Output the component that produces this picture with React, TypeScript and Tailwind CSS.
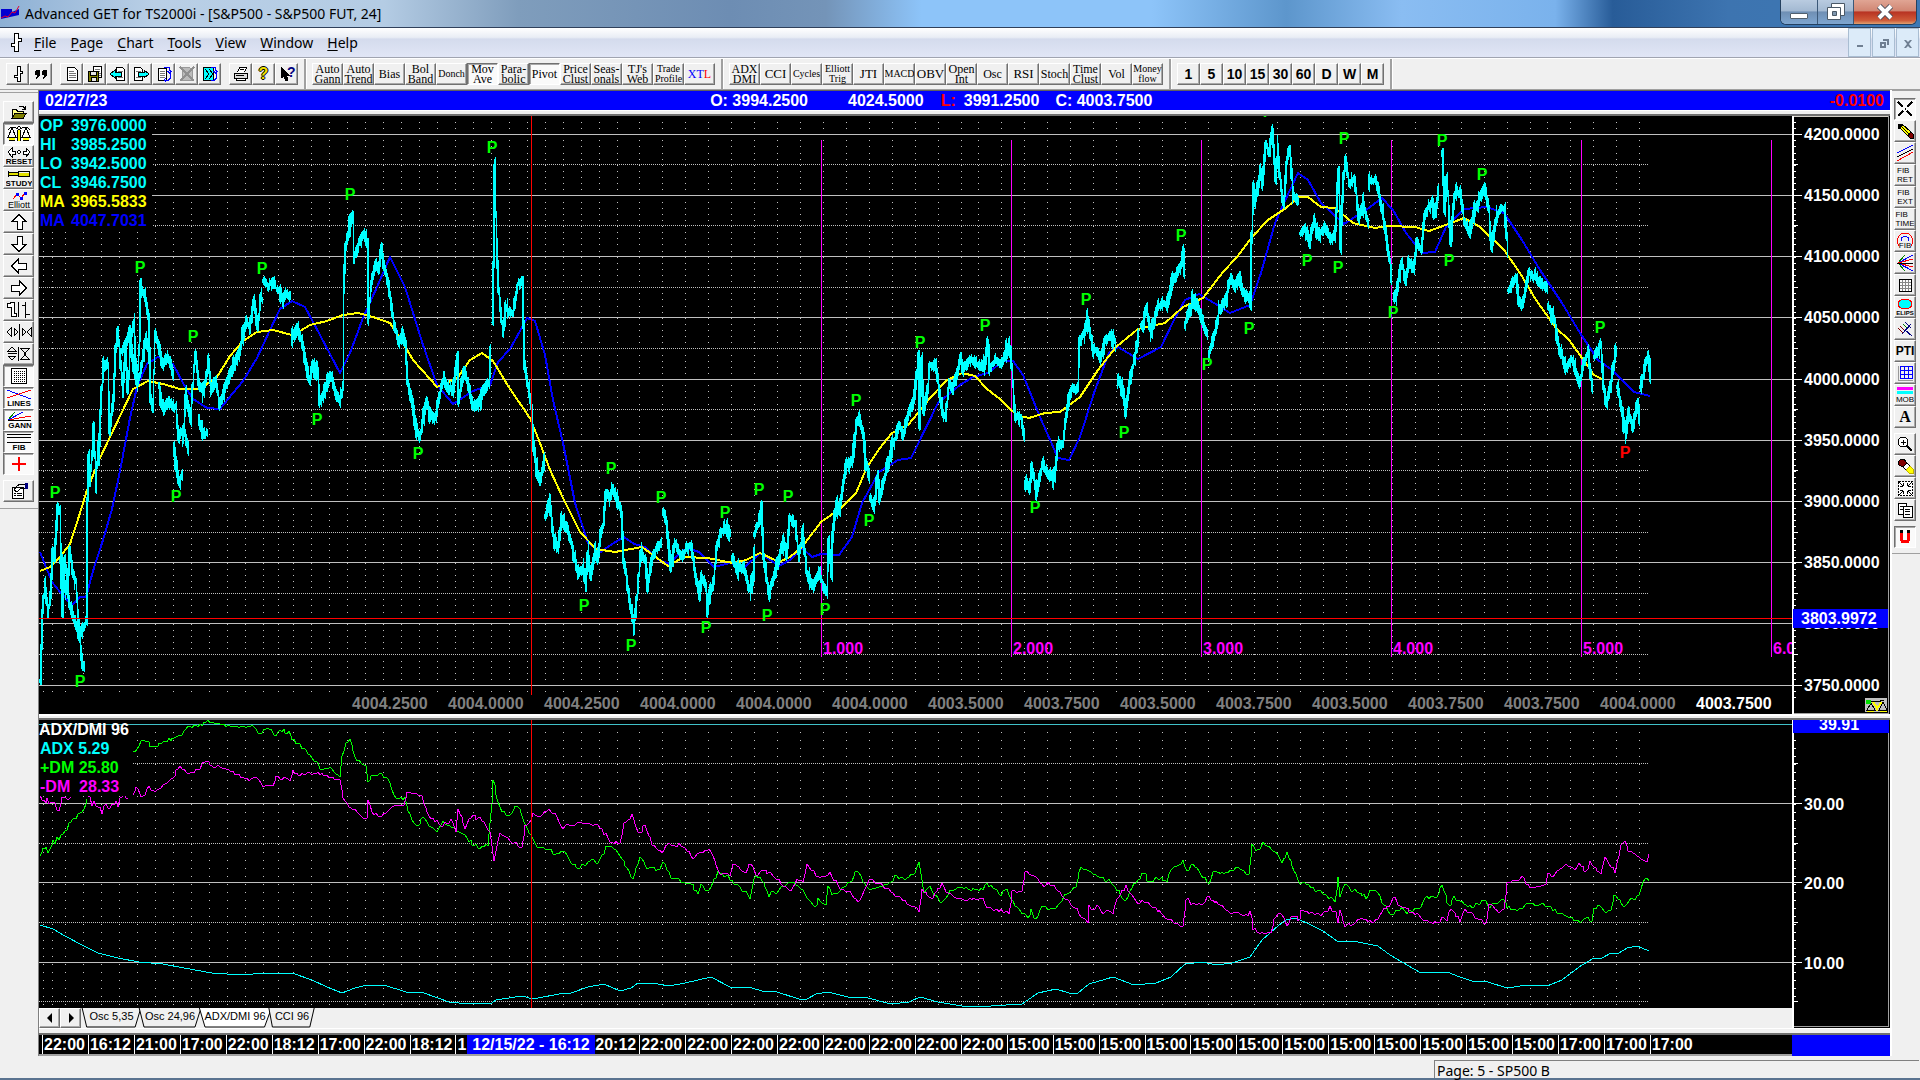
import React from "react";

type Point = [number, number];

// top left corner of the two plots inside the window
const LEFT = 39;
const PRICE_TOP = 116;
const STUDY_TOP = 720;

const parse = (text: string): Point[] =>
  text
    .trim()
    .split(/\s+/)
    .map((pair) => pair.split(",").map(Number) as Point);

const randomizer = (seed: number) => () => {
  seed = (seed * 1664525 + 1013904223) % 4294967296;
  return seed / 4294967296;
};

const walk = (points: Point[], step: number): Point[] => {
  const result: Point[] = [];
  for (let i = 0; i < points.length - 1; i++) {
    const [x1, y1] = points[i];
    const [x2, y2] = points[i + 1];
    const count = Math.max(1, Math.round(Math.abs(x2 - x1) / step));
    for (let k = 0; k < count; k++) {
      result.push([x1 + ((x2 - x1) * k) / count, y1 + ((y2 - y1) * k) / count]);
    }
  }
  result.push(points[points.length - 1]);
  return result;
};

const linePath = (text: string) => "M" + parse(text).join("L");

const jaggedPath = (text: string, seed: number, size = 2) => {
  const random = randomizer(seed);
  return (
    "M" +
    walk(parse(text), 2)
      .map(([x, y]) => `${Math.round(x)},${Math.round(y + (random() - 0.5) * 2 * size)}`)
      .join("L")
  );
};

const priceSegments = [
  "40,680 42,609 44,582 47,613 50,594 52,552 54,559 57,508 59,510 61,582 62,615 64,559 67,594 69,548 72,575 75,580 78,630 82,630 85,622 87,620 87,498 88,455 89,483 93,425 95,488 97,444 98,460 101,388 103,366 107,364 109,430 113,398 115,350 117,332 119,353 122,392 125,352 127,392 130,335 133,322 136,382 139,335 140,285 145,302 148,318 150,400 152,408 154,335 158,345 162,366 167,356 173,376",
  "60,560 64,585 68,600 72,615 77,632 80,640",
  "80,648 82,665 84,668",
  "122,350 125,345 129,330 133,370 137,384 141,365 145,340 150,352",
  "158,387 163,410 168,402 175,408 178,437 183,429 188,450",
  "173,446 176,467 178,480 182,475",
  "182,440 185,395 190,418 193,368 195,353 198,383 202,392 208,364 210,391 215,379 219,406 223,391 230,372 235,362 240,347 245,320 249,328 253,300 257,328 260,299 262,300",
  "263,281 267,286 272,282 275,286",
  "277,289 282,299 285,293 290,297",
  "198,418 202,434 207,433",
  "292,337 297,328 302,345 305,365 309,381 312,366 317,374 319,402 323,395 330,374 335,393 339,402 342,387 343,291 345,245 348,230 352,215 353,258 358,244 363,234 367,247 368,315 370,287 375,263 378,268 381,246 383,265 388,286 393,322 398,343 402,332 405,347 407,383 412,406 415,427 419,437 422,421 426,402 430,416 435,419 438,397 443,378 448,391 453,387 457,357 458,400 463,370 468,387 472,406 478,404 483,389 488,383 490,351",
  "492,322 493,265 494,165 495,215 498,291 502,332 505,309 512,314 517,284 522,282 523,326 524,366 529,398 531,407 533,447 536,468 539,483 544,459",
  "545,516 549,500 552,533 557,549 561,520 567,530 571,547 577,575 582,567 585,588 587,552 590,576 594,553 597,560 600,535 603,523 605,494 609,497 612,488 616,499 621,514 623,560 627,587 632,620 633,630 636,597 640,553 645,560 647,588 651,560 655,549 661,543",
  "663,512 666,523 670,568 674,543 681,558 687,545 691,547 695,577 699,596 701,577 705,587 707,612 709,593 712,588 716,547 720,532 726,529 730,535",
  "732,559 737,570 743,567 749,590 753,577 754,552",
  "754,533 758,522 761,506 763,557 768,596 772,580 776,567 779,555 783,541 786,556 789,518 794,524 798,556 802,532 806,573 812,588 818,571 823,588 826,593 828,540 831,576 832,533 835,505 839,510 843,480 846,465 852,460 856,423 858,417 863,437 865,463 869,478",
  "870,500 873,508 877,476 879,497 883,480 888,463 892,443",
  "893,443 898,425 903,435 908,413 913,400 918,357 919,425 921,358 923,411 927,390 929,365 935,365 938,387 942,415 945,418 948,382 952,388 958,367 960,357 962,368 970,359 980,367 985,362 987,342 989,367 995,359 1001,363 1007,346 1010,349 1013,400 1015,418 1020,417 1024,438",
  "1025,482 1029,490 1031,467 1036,492 1042,463 1048,477 1054,478 1057,447 1062,443 1067,405 1071,389 1077,388 1079,342 1085,327 1087,319 1091,345 1100,358 1104,342 1111,335 1115,343",
  "1117,379 1123,393 1125,413 1129,383 1134,355 1138,339",
  "1141,327 1146,308 1150,336 1154,317 1158,305 1167,303 1172,280 1179,269 1183,254 1184,273",
  "1185,321 1190,310 1193,297 1199,313 1207,335",
  "1208,355 1212,340 1215,330 1218,310 1225,300 1230,277 1234,287 1239,277 1242,291 1248,297 1250,306 1251,237 1253,187 1254,203 1260,170 1262,183 1265,144 1268,153 1272,131 1275,180 1277,147 1279,177 1283,206 1286,163 1289,148 1292,193 1298,203",
  "1300,233 1305,229 1309,243 1313,220 1318,235 1324,226 1330,241 1335,230 1338,171 1340,248 1343,174 1345,160 1348,183 1354,180 1358,220 1362,203 1368,225",
  "1369,182 1375,179 1379,197 1384,227 1388,253 1391,278",
  "1393,299 1396,292 1401,261 1405,283 1408,261 1413,271 1416,243 1421,250 1424,213 1431,202 1435,215 1438,190",
  "1442,153 1444,210 1446,177 1450,243 1454,193 1460,192 1463,220 1469,234 1473,213 1480,196 1484,188 1488,210 1491,249 1496,216 1500,208 1504,209 1507,253",
  "1508,290 1516,277 1518,302 1522,305 1528,273 1533,277 1540,283 1547,287",
  "1547,307 1554,320 1558,347 1565,368 1571,359 1579,383 1583,363 1587,353 1592,389",
  "1594,357 1600,344 1603,387 1606,404 1611,377 1615,350 1616,355",
  "1617,387 1621,410 1625,436 1628,412 1632,428 1637,402 1639,421",
  "1640,387 1644,367 1647,354 1650,375",
];

const candlePath = () => {
  const random = randomizer(77);
  let wicks = "";
  let bodies = "";
  priceSegments.forEach((segment) => {
    const points = walk(parse(segment), 1);
    points.forEach(([x, y], i) => {
      const previous = i > 0 ? points[i - 1][1] : y;
      const spread = random() < 0.2 ? 10 : 5;
      const top = Math.round(Math.min(previous, y) - 2 - random() * spread);
      const bottom = Math.round(Math.max(previous, y) + 2 + random() * spread);
      const column = Math.round(x);
      wicks += `M${column + 0.5},${top}V${bottom}`;
      if (random() < 0.75) {
        bodies += `M${column},${top + 2}V${bottom - 2}`;
      }
    });
  });
  return { wicks, bodies };
};

const candles = candlePath();

const yellowAverage =
  "40,571 50,567 60,557 70,544 80,513 87,490 100,458 110,437 133,389 148,381 163,384 180,389 200,389 217,377 230,356 243,341 257,332 273,330 292,335 300,331 310,325 327,321 343,315 358,313 373,317 390,323 403,343 413,360 430,379 437,387 447,383 458,377 470,360 482,353 493,361 510,389 530,418 540,443 550,470 563,498 580,532 596,549 615,552 642,547 653,555 668,566 684,557 707,558 733,563 746,560 760,553 779,562 790,557 802,547 821,522 841,508 856,493 867,467 880,448 892,433 908,425 918,413 930,398 947,380 962,373 975,376 987,389 1000,399 1012,411 1020,416 1029,418 1045,413 1060,412 1080,397 1098,370 1116,347 1138,329 1165,323 1183,307 1203,298 1223,272 1237,257 1252,237 1268,220 1286,208 1299,197 1308,197 1321,207 1335,208 1353,223 1375,228 1388,226 1415,227 1429,231 1451,223 1464,218 1480,227 1504,250 1520,273 1536,300 1556,328 1569,340 1585,362 1594,375 1602,379";

const blueAverage =
  "40,552 52,582 60,592 72,605 80,597 86,597 93,571 103,540 112,509 120,471 130,418 137,387 147,364 158,357 173,364 183,383 193,399 207,408 220,409 233,393 243,381 257,358 270,330 280,309 292,301 305,307 320,335 340,373 350,353 363,318 377,287 390,257 405,287 423,345 437,385 453,404 473,391 490,385 498,362 510,349 520,331 527,318 535,321 545,355 553,400 563,443 575,503 588,543 601,552 612,544 624,537 634,544 645,547 659,560 670,564 679,554 687,548 699,552 714,567 730,563 745,567 760,553 779,566 790,560 802,548 812,557 821,554 839,555 852,537 862,503 879,472 898,460 911,458 916,448 938,403 960,385 973,377 988,373 1003,361 1013,361 1023,375 1040,417 1058,458 1069,460 1080,437 1094,393 1109,353 1118,347 1138,359 1161,347 1174,320 1185,300 1199,294 1214,303 1230,313 1250,305 1261,273 1275,223 1290,190 1298,173 1308,180 1321,203 1344,224 1366,210 1382,198 1393,210 1406,233 1422,253 1435,252 1446,227 1464,209 1487,207 1504,213 1522,240 1540,270 1562,303 1580,333 1598,360 1612,370 1634,392 1650,396";

const plusDm =
  "133,752 137,750 141,740 147,742 152,748 163,742 180,735 188,727 200,725 208,721 220,725 237,728 252,726 258,733 269,729 276,735 280,730 289,733 294,740 310,755 322,770 330,768 340,778 342,757 346,743 350,740 355,758 366,767 368,780 373,777 380,773 388,780 396,798 405,798 408,813 418,827 423,818 435,832 443,823 455,828 465,837 478,848 488,845 492,803 493,778 498,803 502,813 512,813 515,807 520,808 524,823 533,840 539,848 549,848 555,855 563,849 571,863 580,868 590,860 598,863 606,848 612,846 620,857 629,872 633,879 638,862 640,858 647,867 660,870 663,860 671,877 683,882 689,882 698,892 701,885 707,892 718,873 728,877 738,885 750,897 754,878 760,875 769,895 779,890 787,882 794,882 803,892 815,908 818,900 826,905 828,885 832,895 840,890 850,882 857,871 869,890 877,887 889,885 895,877 905,878 915,873 919,862 924,892 930,887 942,904 948,893 960,888 983,890 987,883 1001,894 1007,889 1013,903 1028,918 1031,910 1036,920 1042,905 1048,908 1054,908 1060,902 1067,892 1076,887 1081,867 1091,873 1101,877 1111,882 1126,902 1132,887 1144,872 1149,883 1158,878 1167,880 1171,868 1183,862 1187,872 1193,865 1209,883 1213,872 1224,874 1238,868 1244,873 1249,872 1252,845 1256,852 1263,843 1271,848 1278,855 1282,863 1287,853 1294,870 1300,882 1313,888 1325,895 1335,900 1338,878 1340,895 1345,885 1353,890 1368,898 1370,890 1376,890 1382,902 1392,915 1402,908 1407,913 1421,907 1425,897 1437,898 1442,885 1449,907 1454,897 1472,908 1484,899 1490,907 1504,900 1507,908 1523,910 1527,902 1547,906 1566,917 1582,922 1588,917 1592,922 1594,909 1600,905 1606,915 1611,908 1614,894 1625,907 1629,900 1639,897 1643,880 1647,877 1649,880";
const plusDmStart = "40,858 43,845 48,850 55,842 61,835 67,827 76,818 84,810 87,797";

const minusDm =
  "133,796 136,788 143,798 149,787 155,793 163,785 171,780 180,767 186,773 198,770 205,761 214,766 224,768 241,777 251,780 257,778 263,786 273,786 276,777 290,780 293,771 300,775 318,772 327,777 340,780 343,797 347,805 355,810 364,821 367,818 368,798 372,812 382,816 396,805 404,805 407,792 416,792 422,798 429,817 443,825 451,820 456,830 458,810 465,827 471,817 480,818 490,833 494,862 500,832 506,838 514,842 522,848 525,827 531,820 533,813 541,816 545,810 553,812 563,828 571,823 584,823 598,825 612,843 620,842 624,825 632,815 638,832 640,833 645,825 652,843 662,852 669,842 675,847 681,844 693,857 699,852 709,850 720,872 730,875 733,865 746,872 749,862 758,877 762,870 771,873 781,883 791,892 797,880 803,882 807,864 818,877 830,873 840,888 850,892 858,902 869,880 881,885 901,898 919,910 922,890 931,900 942,884 948,893 960,900 983,900 987,907 1009,912 1012,892 1022,890 1025,871 1036,877 1044,887 1048,883 1054,885 1069,903 1077,910 1081,918 1088,921 1089,907 1099,907 1103,912 1113,912 1117,898 1126,887 1136,902 1148,902 1167,918 1183,927 1186,898 1191,903 1203,903 1209,897 1220,905 1232,912 1248,915 1250,910 1253,928 1260,933 1271,933 1274,920 1280,912 1287,925 1293,915 1300,920 1301,909 1311,913 1323,915 1330,908 1336,913 1338,923 1340,910 1345,925 1354,923 1358,918 1374,922 1384,910 1389,907 1393,897 1402,908 1415,913 1429,922 1440,922 1442,915 1447,920 1451,908 1460,920 1465,910 1484,923 1487,920 1489,903 1500,912 1504,908 1507,883 1515,881 1522,877 1530,887 1546,885 1548,873 1553,875 1566,865 1575,869 1579,863 1586,873 1590,862 1601,874 1605,858 1615,872 1621,845 1625,843 1628,851 1633,852 1641,858 1647,862 1649,854";
const minusDmStart = "40,797 51,803 59,808 62,797 71,797";
const minusDmMiddle = "88,798 96,807 102,811 108,805 118,805 122,797 128,797";

const adx =
  "40,925 53,929 65,936 82,945 98,953 118,958 139,962 163,964 184,968 212,973 241,975 265,973 292,973 312,980 327,987 342,993 355,988 367,985 384,985 406,992 424,993 449,1002 469,1004 492,1003 496,1000 522,996 533,999 559,994 571,993 588,987 604,984 620,991 631,988 638,983 658,984 669,986 685,983 711,977 730,987 752,988 762,991 777,992 799,999 807,999 816,994 828,992 848,997 864,997 891,1004 909,1002 920,997 938,1002 962,1006 991,1006 1022,1004 1038,993 1056,989 1069,993 1078,993 1089,984 1113,977 1134,985 1156,983 1171,977 1185,964 1203,962 1216,965 1232,963 1250,957 1262,940 1278,926 1286,920 1296,918 1313,926 1323,931 1337,941 1358,942 1378,946 1390,955 1402,962 1421,973 1447,972 1460,977 1472,981 1488,982 1507,988 1527,985 1547,986 1562,980 1582,965 1594,958 1602,958 1611,953 1619,953 1627,948 1637,946 1649,951";

const pivots = parse(
  "55,492 80,681 140,267 176,496 193,336 262,268 317,419 350,194 418,453 492,147 584,605 611,468 631,645 661,497 706,627 725,512 759,489 767,615 788,496 825,609 856,400 869,520 920,342 985,325 1035,507 1086,299 1124,432 1181,235 1207,364 1249,328 1268,111 1307,260 1338,267 1344,138 1393,312 1442,140 1449,260 1482,174 1600,327",
);

const range = (from: number, to: number, step: number) => {
  const values: number[] = [];
  for (let v = from; v <= to; v += step) values.push(v);
  return values;
};

const gridColumns = [
  43, 52, 65,
  ...range(83, 263, 18),
  278,
  ...range(293, 617, 18),
  639,
  ...range(662, 961, 23),
  ...range(978, 1530, 23),
  ...range(1547, 1640, 23),
];

const priceLevels = [
  { y: 134, label: "4200.0000" },
  { y: 195, label: "4150.0000" },
  { y: 256, label: "4100.0000" },
  { y: 317, label: "4050.0000" },
  { y: 379, label: "4000.0000" },
  { y: 440, label: "3950.0000" },
  { y: 501, label: "3900.0000" },
  { y: 562, label: "3850.0000" },
  { y: 623, label: "3800.0000" },
  { y: 685, label: "3750.0000" },
];
const priceHalves = [164, 225, 287, 348, 409, 470, 532, 593, 654];
const studyLevels = [
  { y: 803, label: "30.00" },
  { y: 882, label: "20.00" },
  { y: 962, label: "10.00" },
];
const studyHalves = [763, 843, 922, 1001];

const timeLines = [821, 1011, 1201, 1391, 1581, 1771];

const recentPrices = [
  "4004.2500", "4004.0000", "4004.2500", "4004.0000", "4004.0000",
  "4004.0000", "4003.5000", "4003.7500", "4003.5000", "4003.7500",
  "4003.5000", "4003.7500", "4003.7500", "4004.0000", "4003.7500",
];

// the cursor date covers the two empty slots
const times = [
  "22:00", "16:12", "21:00", "17:00", "22:00", "18:12", "17:00", "22:00", "18:12",
  "1", "", "", "20:12",
  ...Array(8).fill("22:00"),
  ...Array(12).fill("15:00"),
  "17:00", "17:00", "17:00",
];

const PriceChart = () => (
  <svg className="block h-[579px] w-full" shapeRendering="crispEdges" aria-label="S&P500 price chart">
    <g transform={`translate(${-LEFT} ${-PRICE_TOP})`} fill="none">
      {gridColumns.map((x) => (
        <path key={x} d={`M${x}.5 122V693`} stroke="#c0c0c0" strokeDasharray="1 5.12" />
      ))}
      {priceHalves.map((y) => (
        <path key={y} d={`M39 ${y}.5H1649`} stroke="#c0c0c0" strokeDasharray="1 1" />
      ))}
      {priceLevels.map(({ y }) => (
        <path key={y} d={`M39 ${y}.5H3000`} stroke="#c0c0c0" />
      ))}
      {timeLines.map((x) => (
        <path key={x} d={`M${x}.5 140V657`} stroke="#ff00ff" />
      ))}
      <path d={linePath(blueAverage)} stroke="#0000ff" strokeWidth="2" />
      <path d={linePath(yellowAverage)} stroke="#ffff00" strokeWidth="2" />
      <path d={candles.wicks} stroke="#00ffff" />
      <path d={candles.bodies} stroke="#00ffff" strokeWidth="2" />
      <path d="M39 618.5H3000M531.5 116V695" stroke="#ff0000" />
      <g className="font-['Liberation_Sans',sans-serif] text-[16px] font-bold">
        {timeLines.map((x, i) => (
          <text key={x} x={x + 2} y="654" fill="#ff00ff">
            {i + 1}.000
          </text>
        ))}
        {pivots.map(([x, y]) => (
          <text key={`${x}-${y}`} x={x} y={y + 6} textAnchor="middle" fill="#00ff00">
            P
          </text>
        ))}
        <text x="1625" y="458" textAnchor="middle" fill="#ff0000">
          P
        </text>
      </g>
    </g>
  </svg>
);

const PriceAxis = () => (
  <svg className="block h-[598px] w-[98px] shrink-0 bg-black" shapeRendering="crispEdges" aria-label="Price scale">
    <g transform={`translate(-1792 ${-PRICE_TOP})`} fill="none" stroke="#fff">
      <path d="M1793 116V714" strokeWidth="2" />
      <path d="M1795 122V700" strokeWidth="2" strokeDasharray="1 5.12" />
      <path d={priceHalves.map((y) => `M1794 ${y}.5h4`).join("")} />
      <path d={priceLevels.map(({ y }) => `M1794 ${y}.5h8`).join("")} />
      <path d="M1794 116.5h94" stroke="#d4d0c8" />
      <path d="M1888.5 116V714M1794 713.5h94" stroke="#a0a0a0" />
      <g className="font-['Liberation_Sans',sans-serif] text-[16px] font-bold" fill="#fff" stroke="none">
        {priceLevels.map(({ y, label }) => (
          <text key={y} x="1804" y={y + 6}>
            {label}
          </text>
        ))}
        <rect x="1793" y="609" width="95" height="19" fill="#0000ff" />
        <text x="1801" y="624">3803.9972</text>
      </g>
      <rect x="1865" y="698" width="22" height="14" fill="#c0c0c0" stroke="none" />
      <path d="M1873 702l4 6 5-6M1877 706v5" stroke="#ffff00" strokeWidth="2" />
      <path d="M1871 703l-4 7h8zM1883 702l-4 8h8zM1870 701l7 1 7-2" stroke="#000" />
      <path d="M1867 711h7M1880 711h7" stroke="#ffff00" />
      <rect x="1866" y="700" width="5" height="4" fill="#00e000" stroke="none" />
    </g>
  </svg>
);

const StudyChart = () => (
  <svg className="block h-[288px] w-full bg-black" shapeRendering="crispEdges" aria-label="ADX/DMI 96 study">
    <g transform={`translate(${-LEFT} ${-STUDY_TOP})`} fill="none">
      {gridColumns.map((x) => (
        <path key={x} d={`M${x}.5 732V1006`} stroke="#c0c0c0" strokeDasharray="1 7" />
      ))}
      {studyHalves.map((y) => (
        <path key={y} d={`M39 ${y}.5H1649`} stroke="#c0c0c0" strokeDasharray="1 1" />
      ))}
      {studyLevels.map(({ y }) => (
        <path key={y} d={`M39 ${y}.5H3000`} stroke="#c0c0c0" />
      ))}
      <path d="M39 724.5H3000" stroke="#40c0c8" />
      <path d={linePath(adx)} stroke="#00ffff" />
      <path d={jaggedPath(plusDmStart, 3, 4)} stroke="#00ff00" />
      <path d={jaggedPath(plusDm, 5)} stroke="#00ff00" />
      <path d={jaggedPath(minusDmStart, 7, 3)} stroke="#ff00ff" />
      <path d={jaggedPath(minusDmMiddle, 9, 4)} stroke="#ff00ff" />
      <path d={jaggedPath(minusDm, 11)} stroke="#ff00ff" />
      <path d="M531.5 720V1008" stroke="#ff0000" />
    </g>
  </svg>
);

const StudyAxis = () => (
  <svg className="block h-[308px] w-[98px] shrink-0 bg-black" shapeRendering="crispEdges" aria-label="Study scale">
    <g transform={`translate(-1792 ${-STUDY_TOP})`} fill="none" stroke="#fff">
      <path d="M1793 720V1028" strokeWidth="2" />
      <path d="M1795 740V1002" strokeWidth="2" strokeDasharray="1 7" />
      <path d={studyHalves.map((y) => `M1794 ${y}.5h4`).join("")} />
      <path d={studyLevels.map(({ y }) => `M1794 ${y}.5h8`).join("")} />
      <path d="M1888.5 720V1027M1794 1026.5h94" stroke="#a0a0a0" />
      <g className="font-['Liberation_Sans',sans-serif] text-[16px] font-bold" fill="#fff" stroke="none">
        {studyLevels.map(({ y, label }) => (
          <text key={y} x="1804" y={y + 7}>
            {label}
          </text>
        ))}
        <rect x="1793" y="720" width="96" height="13" fill="#0000ff" />
        <text x="1819" y="730">39.91</text>
      </g>
    </g>
  </svg>
);

const raised = "border border-t-white border-l-white border-b-[#707070] border-r-[#707070] bg-[#f0f0f0] shadow-[inset_-1px_-1px_0_#a8a8a8]";
const sunken = "border border-t-[#707070] border-l-[#707070] border-b-white border-r-white bg-[#fafafa] shadow-[inset_1px_1px_0_#a8a8a8]";

interface ToolProps {
  name: string;
  width: string;
  pressed?: boolean;
  children: React.ReactNode;
}

const Tool = ({ name, width, pressed = false, children }: ToolProps) => (
  <button
    type="button"
    aria-label={name}
    aria-pressed={pressed}
    className={`flex h-[22px] shrink-0 items-center justify-center overflow-hidden text-black ${width} ${
      pressed ? sunken : raised
    }`}
  >
    {children}
  </button>
);

const Glyph = ({ w = 18, h = 18, children }: { w?: number; h?: number; children: React.ReactNode }) => (
  <svg width={w} height={h} viewBox={`0 0 ${w} ${h}`} fill="none" stroke="#000" shapeRendering="crispEdges" className="shrink-0">
    {children}
  </svg>
);

const sheet = "M4.5 2.5h7l3 3v10h-10z";
const sheetLines = "M6 6.5h5M6 8.5h7M6 10.5h7M6 12.5h7";

const ChartLogo = () => (
  <Glyph w={14} h={22}>
    <path d="M6.500 1.500h3v5h3v3h-3v10h-4v-5h-3v-3h3v-10z" fill="#fff" />
  </Glyph>
);

const fileTools = [
  { name: "Chart", icon: <Glyph><path d="M8.500 1.500h3v5h2v2h-2v8h-3v-4h-3v-2h3v-9z" fill="#fff" /></Glyph> },
  { name: "Quote", icon: <Glyph><path d="M4 5h4v5l-3 4h-1l1-4h-2v-4zM11 5h4v5l-3 4h-1l1-4h-2v-4z" fill="#000" stroke="none" /></Glyph> },
];

const pageTools = [
  { name: "New page", icon: <Glyph><path d={sheet} fill="#fff" /><path d={sheetLines} stroke="#777" /></Glyph> },
  { name: "Save page", icon: <Glyph><path d="M7.500 1.500h8v11h-8z" fill="#fff" /><path d="M9 4.500h5M9 6.500h5M12 8.500h3M13 10.500h2" stroke="#777" /><path d="M2.500 6.500h10v10h-10z" fill="#808000" /><path d="M4.500 6.500h6v4h-6zM5.500 12.500h5v4h-5z" fill="#e8e8e8" /></Glyph> },
  { name: "Previous page", icon: <Glyph><path d="M7.500 2.500h6l2 2v11h-8z" fill="#fff" /><path d="M9 6.500h5M9 12.500h5" stroke="#777" /><path d="M1 9l5-4v2h6v4H6v2z" fill="#00ffff" stroke="#000" /></Glyph> },
  { name: "Next page", icon: <Glyph><path d="M2.500 2.500h6l2 2v11h-8z" fill="#fff" /><path d="M4 6.500h5M4 12.500h5" stroke="#777" /><path d="M17 9l-5-4v2H6v4h6v2z" fill="#00ffff" stroke="#000" /></Glyph> },
  { name: "Cycle page", icon: <Glyph><path d="M3.500 3.500h8v12h-8z" fill="#fff" /><path d="M5 6.500h5M5 8.500h5M5 10.500h5M5 12.500h5" stroke="#777" /><path d="M9 2.500h5l1 3v8l-2 2h-3" stroke="#0000ff" /><path d="M12.500 6l2 2 2-2M11 13l-2 2 2 2" stroke="#0000ff" /></Glyph> },
  { name: "Delete page", icon: <Glyph><path d={sheet} fill="#bbb" stroke="#999" /><path d="M2 2l14 14M16 2L2 16" stroke="#909090" strokeWidth="2" /></Glyph> },
  { name: "Cycle all", icon: <Glyph><path d="M2.500 2.500h10v13h-10z" fill="#00ffff" /><path d="M4 4l4 5-4 5M8 4l4 5-4 5" /><path d="M10 2.500h4l1 3v8l-2 2h-3M12.500 6l2 2 2-2" stroke="#0000ff" /></Glyph> },
];

const helpTools = [
  { name: "Print", icon: <Glyph><path d="M5.500 7.500l2-5h7l-2 5" fill="#fff" /><path d="M2.500 8.500h13v5h-13z" fill="#ddd" /><path d="M4.500 13.500h9v2h-9z" fill="#fff" /><path d="M8 4.500h4M4 10.500h8" /></Glyph> },
  { name: "Help", icon: <span className="font-['Liberation_Sans',sans-serif] text-[16px] leading-none font-bold text-[#f0e000] [text-shadow:1px_0_#000,-1px_0_#000,0_1px_#000,0_-1px_#000]">?</span> },
  { name: "Context help", icon: <Glyph><path d="M3 2v11l3-2 2 5 2-1-2-5h3z" fill="#000" /><text x="9" y="12" fill="#000080" stroke="none" className="font-['Liberation_Sans',sans-serif] text-[14px] font-bold">?</text></Glyph> },
];

const studyTools = [
  ["Auto", "Gann"], ["Auto", "Trend"], ["Bias"], ["Bol", "Band"], ["Donch"], ["Mov", "Ave"],
  ["Para-", "bolic"], ["Pivot"], ["Price", "Clust"], ["Seas-", "onals"], ["TJ's", "Web"], ["Trade", "Profile"],
];

const indicatorTools = [
  ["ADX", "DMI"], ["CCI"], ["Cycles"], ["Elliott", "Trig"], ["JTI"], ["MACD"], ["OBV"], ["Open", "Int"],
  ["Osc"], ["RSI"], ["Stoch"], ["Time", "Clust"], ["Vol"], ["Money", "flow"],
];

const small = ["MACD", "Elliott", "Money", "Cycles", "Donch", "Trade"];
const large = ["CCI", "JTI", "OBV", "RSI"];

const StudyTool = ({ words }: { words: string[] }) => (
  <Tool name={words.join(" ")} width="w-[31px]" pressed={words[0] === "Mov" || words[0] === "Pivot"}>
    <span
      className={`text-center font-['Liberation_Serif',serif] leading-[10px] ${
        small.includes(words[0]) ? "text-[10px]" : large.includes(words[0]) ? "text-[13px]" : "text-[12px]"
      }`}
    >
      {words.map((word) => (
        <span key={word} className="block">
          {word}
        </span>
      ))}
    </span>
  </Tool>
);

const Separator = () => <div className="mr-[5px] ml-[6px] h-[30px] w-[3px] shrink-0 border-l-2 border-[#a0a0a0] bg-white" />;

const caption = "font-['Liberation_Sans',sans-serif] text-[8px] font-bold";

const leftTools = [
  { name: "Open", icon: <Glyph w={26}><path d="M6.500 15.500v-9h4l1 2h6v7z" fill="#ffff80" /><path d="M6 15.500l3-5h11l-3 5z" fill="#808000" /><path d="M13 3.500h4l2 2M19 3v3h-3" /></Glyph> },
  { name: "Balance", pressed: true, icon: <Glyph w={26}><path d="M13 4v12" stroke="#ffff00" strokeWidth="2" /><path d="M2 4.500l3-2h4l4 2 4-2h4l3 2M11.500 5v11M14.500 5v11" /><path d="M6 3l-4.500 10M6 3l4.500 10M20 3l-4.500 10M20 3l4.500 10M11 3l2-2 2 2M2 12.500h8M16 12.500h8M3 15.500h6M17 15.500h6" /><path d="M3 14h6M17 14h6" stroke="#ffff00" strokeWidth="2" /></Glyph> },
  { name: "Reset", icon: <Glyph w={26}><path d="M2 5l4-4v3h3v3H6v3zM24 5l-4-4v3h-3v3h3v3zM11 5l2-2 2 2-2 2z" fill="#fff" /><text x="13" y="17" textAnchor="middle" fill="#000" stroke="none" className={caption}>RESET</text></Glyph> },
  { name: "Study", icon: <Glyph w={26}><path d="M3 5.500h20" stroke="#e0e000" strokeWidth="3" /><path d="M2.500 2v6M2 3.500h10M2 6.500h10M12.500 2.500h11v5h-11z" /><text x="13" y="17" textAnchor="middle" fill="#000" stroke="none" className={caption}>STUDY</text></Glyph> },
  { name: "Elliott", icon: <Glyph w={26}><path d="M7 8l4-5 4 4 4-5" stroke="#ff0000" /><path d="M10 2h2v2h-2zM14 6h2v2h-2zM18 1h2v2h-2z" fill="#0000ff" stroke="#0000ff" /><text x="13" y="17" textAnchor="middle" fill="#000" stroke="none" className="font-['Liberation_Sans',sans-serif] text-[9px]">Elliott</text></Glyph> },
  { name: "Up", icon: <Glyph w={26}><path d="M13 1.500l7 7h-4v8h-5v-8H6z" fill="#fff" /></Glyph> },
  { name: "Down", icon: <Glyph w={26}><path d="M13 16.500l7-7h-4v-8h-5v8H6z" fill="#fff" /></Glyph> },
  { name: "Left", icon: <Glyph w={26}><path d="M5.500 9l7-7v4h8v6h-8v4z" fill="#fff" /></Glyph> },
  { name: "Right", icon: <Glyph w={26}><path d="M20.500 9l-7-7v4h-8v6h8v4z" fill="#fff" /></Glyph> },
  { name: "Bar type", icon: <Glyph w={26}><path d="M1.500 2.500h3v-1h4v11h2v3h-5v-9h-4z" fill="#fff" /><path d="M12.500 1v15M16 4.500h4M19.500 1v16M20 13.500h4" /></Glyph> },
  { name: "Bar spacing", icon: <Glyph w={26}><path d="M5 5l-4 4 4 4zM8 5l4 4-4 4zM16 5l4 4-4 4zM25 5l-4 4 4 4z" /><path d="M13.500 1v16" /></Glyph> },
  { name: "Scale", icon: <Glyph w={26}><path d="M2 6l4-4 4 4zM2 11l4 4 4-4zM2 8.500h9M12.500 2v14M15 3.500h8l-4 5zM15 14.500h8l-4-5z" /></Glyph> },
  { name: "Grid", pressed: true, icon: <Glyph w={26}><path d="M5.500 1.500h15v15h-15z" fill="#fff" /><path d="M8 4.500h12M8 6.500h12M8 8.500h12M8 10.500h12M8 12.500h12M8 14.500h12" strokeDasharray="1 1" /></Glyph> },
  { name: "Lines", pressed: true, icon: <Glyph w={26}><path d="M1 1l24 9" stroke="#0000ff" /><path d="M1 9L25 1" stroke="#ff0000" /><text x="13" y="17" textAnchor="middle" fill="#000" stroke="none" className={caption}>LINES</text></Glyph> },
  { name: "Gann", pressed: true, icon: <Glyph w={26}><path d="M2 9L9 1" stroke="#008000" /><path d="M2 9l23-4" stroke="#ff0000" /><path d="M2 9l15-8" stroke="#0000ff" /><path d="M2 9.500h23" /><text x="14" y="17" textAnchor="middle" fill="#000" stroke="none" className={caption}>GANN</text></Glyph> },
  { name: "Fibonacci", pressed: true, icon: <Glyph w={26}><path d="M1 1.500h24M1 4.500h24M1 9.500h24" /><text x="13" y="17" textAnchor="middle" fill="#000" stroke="none" className={caption}>FIB</text></Glyph> },
  { name: "Crosshair", pressed: true, icon: <Glyph w={26}><path d="M13 2v14M6 9h14" stroke="#ff0000" strokeWidth="2" /></Glyph> },
];

const stacked = (top: string, bottom: string) => (
  <span className="text-left font-['Liberation_Sans',sans-serif] text-[8px] leading-[9px]">
    <span className="block">{top}</span>
    <span className="block">{bottom}</span>
  </span>
);

const drawTools = [
  { name: "Select", pressed: true, icon: <Glyph><path d="M2 2l5 5M16 2l-5 5M2 16l5-5M16 16l-5-5" strokeWidth="2" /><path d="M9 8v2" /></Glyph> },
  { name: "Pencil", icon: <Glyph><path d="M3 5l3-3 9 8-3 4z" fill="#ffff00" /><path d="M2 2h4l1 1-4 4-1-1z" fill="#000" /><path d="M12 14l3-4 2 2v4h-3z" fill="#800000" /><path d="M5 4l8 8" /></Glyph> },
  { name: "Trend lines", icon: <Glyph><path d="M1 9l16-8" stroke="#0000ff" /><path d="M1 13l16-8" /><path d="M1 17L17 8" stroke="#ff0000" /></Glyph> },
  { name: "Fibonacci retracement", icon: stacked("FIB", "RET") },
  { name: "Fibonacci extension", icon: stacked("FIB", "EXT") },
  { name: "Fibonacci time", icon: stacked("FIB", "TIME") },
  { name: "Fibonacci arc", icon: <Glyph><path d="M3 14C-1 8 3 1 9 1s10 7 6 13" stroke="#ff0000" /><path d="M5 9c0-6 8-6 8 0" stroke="#0000ff" /><text x="9" y="16" textAnchor="middle" fill="#000" stroke="none" className="font-['Liberation_Sans',sans-serif] text-[8px]">FIB</text></Glyph> },
  { name: "Gann fan", icon: <Glyph><path d="M2 9L9 1M2 9l7 8" stroke="#008000" /><path d="M2 9l15-8M2 9l15 8" stroke="#0000ff" /><path d="M2 9l15-4M2 9l15 4" stroke="#ff0000" /><path d="M1 9.500h16" /></Glyph> },
  { name: "Gann box", icon: <Glyph><path d="M3.500 3.500h12v12h-12z" fill="#fff" /><path d="M6.500 4v11M9.500 4v11M12.500 4v11M4 6.500h11M4 9.500h11M4 12.500h11" stroke="#888" /></Glyph> },
  { name: "Ellipse", icon: <Glyph><ellipse cx="9" cy="6" rx="7" ry="5" fill="#00ffff" stroke="#ff0000" /><text x="9" y="17" textAnchor="middle" fill="#000" stroke="none" className="font-['Liberation_Sans',sans-serif] text-[6px] font-bold">ELIPS</text></Glyph> },
  { name: "Regression", icon: <Glyph><path d="M2 8l5 5M4 6l5 5" stroke="#800000" /><path d="M7 4l5 5" stroke="#008000" /><path d="M9 2l6 6M6 14L15 4M9 10l7 6" stroke="#000080" /></Glyph> },
  { name: "Profit taking index", icon: <span className="font-['Liberation_Sans',sans-serif] text-[12px] font-bold">PTI</span> },
  { name: "Time grid", icon: <Glyph><path d="M4.500 2.500h12v12h-12zM8.500 3v11M12.500 3v11M5 6.500h11M5 10.500h11" stroke="#0000ff" /><path d="M2.500 2v14.500h14" stroke="#999" /></Glyph> },
  { name: "Make or break", icon: <Glyph><path d="M1 2.500h16" stroke="#ff00ff" strokeWidth="3" /><path d="M1 6h16" stroke="#00ffff" strokeWidth="3" /><text x="9" y="16" textAnchor="middle" fill="#000" stroke="none" className="font-['Liberation_Sans',sans-serif] text-[8px]">MOB</text></Glyph> },
  { name: "Text", icon: <span className="font-['Liberation_Serif',serif] text-[16px] leading-none font-bold">A</span> },
];

const viewTools = [
  { name: "Zoom", icon: <Glyph><circle cx="7" cy="7" r="5" fill="#fff" /><path d="M5 7.500h5M7.500 5v5" /><path d="M11 11l5 5" strokeWidth="2" /></Glyph> },
  { name: "Eraser", icon: <Glyph><path d="M2 5l3-3h3l3 4-4 4-4-2z" fill="#800000" /><path d="M7 10l4-4 3 3-4 4z" fill="#fff" /><path d="M10 13l4-4 3 3v4h-4z" fill="#ffff00" stroke="#c0b000" /></Glyph> },
  { name: "Fit", icon: <Glyph><path d="M2.500 2.500h14v14h-14z" fill="#fff" strokeDasharray="2 1" /><path d="M4 8l3-1 1-3M15 8l-3-1-1-3M4 11l3 1 1 3M15 11l-3 1-1 3M3 3l4 4M16 3l-4 4M3 16l4-4M16 16l-4-4" /></Glyph> },
  { name: "Pages", icon: <Glyph><path d="M2.500 2.500h8v11h-8z" fill="#fff" /><path d="M7.500 5.500h9v11h-9z" fill="#fff" /><path d="M4 5.500h4M4 8.500h3M9 8.500h5M9 10.500h5M9 13.500h5" /></Glyph> },
];

const menus = ["File", "Page", "Chart", "Tools", "View", "Window", "Help"];

const TitleBar = () => (
  <header className="flex h-7 shrink-0 items-center border-b border-[#30405a] bg-[linear-gradient(90deg,#8db0d4_0%,#b9cfe6_8%,#b4cce4_20%,#7f9dbc_27%,#6d8db3_38%,#7494b8_43%,#8dc4f9_48%,#8dc4f9_60%,#5d96cc_67%,#8abdf2_73%,#7ab2ec_81%,#285c98_84%,#3d74b0_90%,#3d78b4_100%)] pl-px">
    <svg width="20" height="18" viewBox="0 0 20 18" aria-hidden="true">
      <path d="M0 4h11v3l7-3v6l-9 2-9 2z" fill="#0000d0" />
      <path d="M0 13l4-2 3 1 4-5 3 1 4-7" fill="none" stroke="#e00030" />
    </svg>
    <h1 className="ml-1 font-['Noto_Sans',sans-serif] text-[14px] text-black">
      Advanced GET for TS2000i - [S&amp;P500 - S&amp;P500 FUT, 24]
    </h1>
    <div className="mr-[3px] ml-auto flex h-[25px] self-start overflow-hidden rounded-b-md border border-t-0 border-[#24405f] shadow-[inset_0_0_0_1px_#c9d8e8]">
      <button type="button" aria-label="Minimize" className="flex w-[37px] items-end justify-center border-r border-[#3b5878] bg-[linear-gradient(#b9cbe0_0%,#a3b9d2_45%,#6f8fb4_50%,#7fa6d0_100%)] pb-[5px]">
        <span className="h-[6px] w-[18px] rounded-[1px] border border-[#51606e] bg-white" />
      </button>
      <button type="button" aria-label="Restore" className="flex w-[36px] items-center justify-center border-r border-[#3b5878] bg-[linear-gradient(#b9cbe0_0%,#a3b9d2_45%,#6f8fb4_50%,#7fa6d0_100%)]">
        <svg width="22" height="20" viewBox="0 0 22 20" stroke="#4a5866" fill="#fff">
          <path d="M6.500 1.500h13v12h-13z" />
          <path d="M2.500 5.500h13v12h-13z" />
          <path d="M7.500 9.500h4v4h-4z" fill="#7f97ae" />
        </svg>
      </button>
      <button type="button" aria-label="Close" className="flex w-[62px] items-center justify-center bg-[linear-gradient(#e0a594_0%,#d18673_45%,#b83322_50%,#cf5a38_85%,#e0a070_100%)]">
        <svg width="20" height="18" viewBox="0 0 20 18">
          <path d="M4 3l12 12M16 3L4 15" stroke="#4a4f5c" strokeWidth="6" />
          <path d="M4 3l12 12M16 3L4 15" stroke="#fff" strokeWidth="4" />
        </svg>
      </button>
    </div>
  </header>
);

const MenuBar = () => (
  <nav className="flex h-[30px] shrink-0 items-center border-b border-[#a0a4b0] bg-[linear-gradient(#ffffff_0%,#e9edf5_32%,#d4dbed_38%,#e1e6f6_100%)] pl-[9px] font-['Noto_Sans',sans-serif] text-[14px] text-black">
    <ChartLogo />
    <ul className="ml-[11px] flex gap-[14px]">
      {menus.map((menu) => (
        <li key={menu}>
          <a href="#">
            <span className="underline underline-offset-2">{menu[0]}</span>
            {menu.slice(1)}
          </a>
        </li>
      ))}
    </ul>
    <div className="mr-px ml-auto flex h-full gap-px">
      {["M8 14h6v2H8z", "M7 11h6v6H7zM9 13v2h2v-2zM10 8h6v6h-2v-4h-4z", "M7 9h2l2 2 2-2h2l-3 4 3 4h-2l-2-2-2 2H7l3-4z"].map((shape, i) => (
        <button
          key={shape}
          type="button"
          aria-label={["Minimize chart", "Restore chart", "Close chart"][i]}
          className="flex w-[23px] items-center justify-center border border-[#a9bdd2] bg-[#dcebf9]"
        >
          <svg width="22" height="24" viewBox="0 0 22 24" fill="#6f7f92" fillRule="evenodd" className="shrink-0">
            <path d={shape} />
          </svg>
        </button>
      ))}
    </div>
  </nav>
);

const ToolBar = () => (
  <div className="flex h-[32px] shrink-0 items-center border-t border-b border-t-white border-b-[#a0a0a0] bg-[#f0f0f0] pl-[6px]">
    <div className="flex">
      {fileTools.map((tool) => (
        <Tool key={tool.name} name={tool.name} width="w-[23px]">{tool.icon}</Tool>
      ))}
    </div>
    <div className="ml-2 flex">
      {pageTools.map((tool) => (
        <Tool key={tool.name} name={tool.name} width="w-[23px]">{tool.icon}</Tool>
      ))}
    </div>
    <div className="ml-2 flex">
      {helpTools.map((tool) => (
        <Tool key={tool.name} name={tool.name} width="w-[23px]">{tool.icon}</Tool>
      ))}
    </div>
    <Separator />
    <div className="flex">
      {studyTools.map((words) => (
        <StudyTool key={words.join()} words={words} />
      ))}
      <Tool name="XTL" width="w-[31px]">
        <span className="font-['Liberation_Serif',serif] text-[12px] leading-none">
          <span className="text-[#0000ff]">XT</span>
          <span className="text-[#ff0000]">L</span>
        </span>
      </Tool>
    </div>
    <Separator />
    <div className="flex">
      {indicatorTools.map((words) => (
        <StudyTool key={words.join()} words={words} />
      ))}
    </div>
    <Separator />
    <div className="flex">
      {["1", "5", "10", "15", "30", "60", "D", "W", "M"].map((interval) => (
        <Tool key={interval} name={interval} width="w-[23px]">
          <span className="font-['Liberation_Sans',sans-serif] text-[14px] font-bold">{interval}</span>
        </Tool>
      ))}
    </div>
    <Separator />
  </div>
);

const legend = [
  { name: "OP", value: "3976.0000", color: "text-[#00ffff]" },
  { name: "HI", value: "3985.2500", color: "text-[#00ffff]" },
  { name: "LO", value: "3942.5000", color: "text-[#00ffff]" },
  { name: "CL", value: "3946.7500", color: "text-[#00ffff]" },
  { name: "MA", value: "3965.5833", color: "text-[#ffff00]" },
  { name: "MA", value: "4047.7031", color: "text-[#0000ff]" },
];

const StudyTabs = () => (
  <div className="flex h-5 bg-[#f0f0f0]">
    <button type="button" aria-label="Previous study" className={`flex w-[21px] items-center justify-center ${raised}`}>
      <svg width="8" height="10" viewBox="0 0 8 10"><path d="M6 0v10L1 5z" /></svg>
    </button>
    <button type="button" aria-label="Next study" className={`flex w-[21px] items-center justify-center ${raised}`}>
      <svg width="8" height="10" viewBox="0 0 8 10"><path d="M2 0v10l5-5z" /></svg>
    </button>
    {[
      { label: "Osc 5,35", width: "w-[57px]" },
      { label: "Osc 24,96", width: "w-[60px]" },
      { label: "ADX/DMI 96", width: "w-[70px]" },
      { label: "CCI 96", width: "w-[44px]" },
    ].map(({ label, width }, i) => (
      <button
        key={label}
        type="button"
        className={`relative flex h-5 justify-center pl-1 font-['Liberation_Sans',sans-serif] text-[11px] leading-[16px] font-normal whitespace-nowrap text-black ${width}`}
      >
        <svg className="absolute inset-0 h-full w-full overflow-visible" viewBox="0 0 100 20" preserveAspectRatio="none">
          <path d="M2 0L10 19H95L105 0" fill={i === 2 ? "#fff" : "#f0f0f0"} stroke="#000" vectorEffect="non-scaling-stroke" />
        </svg>
        <span className="relative">{label}</span>
      </button>
    ))}
  </div>
);

const Dock = ({ children, className }: { children: React.ReactNode; className: string }) => (
  <aside className={`flex shrink-0 flex-col bg-[#f0f0f0] ${className}`}>{children}</aside>
);

const App = () => {
  return (
    <div className="flex h-screen flex-col overflow-hidden bg-[#f0f0f0]">
      <TitleBar />
      <MenuBar />
      <ToolBar />
      <div className="flex">
        <Dock className="w-[38px] pt-[2px]">
          <div className="flex flex-col border-t border-b border-[#a0a0a0] pt-2 pb-[6px] pl-[3px]">
            {leftTools.map((tool) => (
              <Tool key={tool.name} name={tool.name} width="w-[31px]" pressed={tool.pressed}>
                {tool.icon}
              </Tool>
            ))}
            <div className="mt-[5px]">
              <Tool name="Properties" width="w-[31px]">
                <Glyph w={26}>
                  <path d="M6.500 5.500h11v11h-11z" fill="#fff" />
                  <path d="M8 11.500h2M11 11.500h5M8 13.500h2M11 13.500h5M8 8l3-4 3-2h5v4l-5 1-3 3z" />
                  <path d="M19 1h3v6h-3z" fill="#000080" stroke="none" />
                </Glyph>
              </Tool>
            </div>
          </div>
        </Dock>

        <main className="min-w-0 flex-1 border-l border-[#808080] font-['Liberation_Sans',sans-serif] text-[16px] font-bold text-white">
          <div className="grid h-5 grid-cols-[10fr_auto_11fr] items-center border-t border-[#606060] bg-[#0000ff] pr-[6px] pl-[6px] leading-none">
            <span>02/27/23</span>
            <div className="flex">
              <span className="mr-10">O: 3994.2500</span>
              <span className="mr-[17px]">4024.5000</span>
              <span className="mr-2 text-[#ff0000]">L:</span>
              <span className="mr-4">3991.2500</span>
              <span>C: 4003.7500</span>
            </div>
            <span className="text-right text-[#ff0000]">-0.0100</span>
          </div>
          <div className="h-[6px] border-t border-b-2 border-t-white border-b-[#707070] bg-[#f0f0f0]" />

          <div className="flex">
            <div className="relative min-w-0 flex-1 bg-black">
              <PriceChart />
              <dl className="absolute top-0 left-0 w-[113px] bg-black leading-[19px]">
                {legend.map(({ name, value, color }) => (
                  <div key={value} className={`flex ${color}`}>
                    <dt className="w-8 pl-px">{name}</dt>
                    <dd>{value}</dd>
                  </div>
                ))}
              </dl>
              <div className="flex h-[19px] justify-end overflow-hidden text-[#808080]">
                {recentPrices.map((price, i) => (
                  <span key={i} className={`w-24 shrink-0 leading-[18px] ${i === 14 ? "text-white" : ""}`}>
                    {price}
                  </span>
                ))}
              </div>
            </div>
            <PriceAxis />
          </div>

          <div className="h-[6px] border-t-2 border-b-2 border-t-white border-b-[#707070] bg-[#f0f0f0]" />

          <div className="flex">
            <div className="relative min-w-0 flex-1">
              <StudyChart />
              <dl className="absolute top-0 left-0 w-[93px] leading-[19px] whitespace-nowrap">
                <dt className="text-white">ADX/DMI 96</dt>
                <dd className="bg-black pl-px text-[#00ffff]">ADX 5.29</dd>
                <dd className="bg-black pl-px text-[#00ff00]">+DM 25.80</dd>
                <dd className="bg-black pl-px text-[#ff00ff]">-DM&nbsp; 28.33</dd>
              </dl>
              <StudyTabs />
            </div>
            <StudyAxis />
          </div>

          <div className="h-[7px] border-t border-b-2 border-t-white border-b-[#707070] bg-[#f0f0f0]" />

          <div className="flex h-[21px]">
            <div className="relative flex min-w-0 flex-1 border-b-2 border-[#a0a0a0] bg-black pl-[3px]">
              {times.map((time, i) => (
                <span key={i} className="min-w-0 flex-1 overflow-hidden border-l border-white pl-px leading-[19px]">
                  {time}
                </span>
              ))}
              <div className="w-24 shrink-0" />
              <span className="absolute inset-y-0 left-[428px] w-32 bg-[#0000ff] text-center leading-[19px] whitespace-nowrap">
                12/15/22 - 16:12
              </span>
            </div>
            <div className="w-[98px] shrink-0 bg-[#0000ff]" />
          </div>
        </main>

        <Dock className="w-[30px] border-l-2 border-white">
          <div className="flex flex-col border-t border-b border-[#a0a0a0] pt-[7px] pb-[5px] pl-[2px]">
            {drawTools.map((tool) => (
              <Tool key={tool.name} name={tool.name} width="w-[22px]" pressed={tool.pressed}>
                {tool.icon}
              </Tool>
            ))}
            <div className="mt-[5px] flex flex-col">
              {viewTools.map((tool) => (
                <Tool key={tool.name} name={tool.name} width="w-[22px]">
                  {tool.icon}
                </Tool>
              ))}
            </div>
            <div className="mt-[5px]">
              <Tool name="Magnet" width="w-[22px]" pressed>
                <Glyph>
                  <path d="M5.500 5v6q0 3 3.500 3t3.500-3V5" stroke="#ff0000" strokeWidth="3" />
                  <path d="M4 3.500h3M11 3.500h3" strokeWidth="3" />
                </Glyph>
              </Tool>
            </div>
          </div>
        </Dock>
      </div>

      <footer className="mt-auto flex h-[20px] shrink-0 justify-end border-b-2 border-[#5a7390] pr-px">
        <div className="w-[485px] border-t border-l border-[#808080] pl-[2px] font-['Noto_Sans',sans-serif] text-[14px] leading-[19px] text-black">
          Page: 5 - SP500 B
        </div>
      </footer>
    </div>
  );
};

export default App;
